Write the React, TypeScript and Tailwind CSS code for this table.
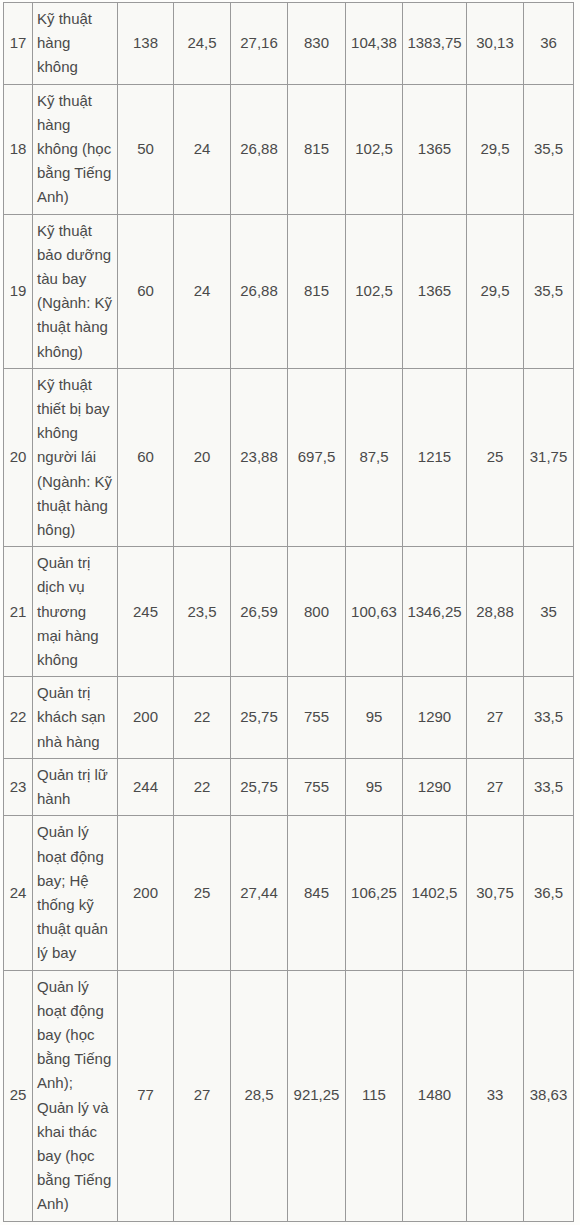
import React from "react";

type Row = {
  stt: string;
  name: string[];
  values: string[];
};

const rows: Row[] = [
  {
    stt: "17",
    name: ["Kỹ thuật", "hàng", "không"],
    values: ["138", "24,5", "27,16", "830", "104,38", "1383,75", "30,13", "36"],
  },
  {
    stt: "18",
    name: ["Kỹ thuật", "hàng", "không (học", "bằng Tiếng", "Anh)"],
    values: ["50", "24", "26,88", "815", "102,5", "1365", "29,5", "35,5"],
  },
  {
    stt: "19",
    name: ["Kỹ thuật", "bảo dưỡng", "tàu bay", "(Ngành: Kỹ", "thuật hàng", "không)"],
    values: ["60", "24", "26,88", "815", "102,5", "1365", "29,5", "35,5"],
  },
  {
    stt: "20",
    name: ["Kỹ thuật", "thiết bị bay", "không", "người lái", "(Ngành: Kỹ", "thuật hàng", "hông)"],
    values: ["60", "20", "23,88", "697,5", "87,5", "1215", "25", "31,75"],
  },
  {
    stt: "21",
    name: ["Quản trị", "dịch vụ", "thương", "mại hàng", "không"],
    values: ["245", "23,5", "26,59", "800", "100,63", "1346,25", "28,88", "35"],
  },
  {
    stt: "22",
    name: ["Quản trị", "khách sạn", "nhà hàng"],
    values: ["200", "22", "25,75", "755", "95", "1290", "27", "33,5"],
  },
  {
    stt: "23",
    name: ["Quản trị lữ", "hành"],
    values: ["244", "22", "25,75", "755", "95", "1290", "27", "33,5"],
  },
  {
    stt: "24",
    name: ["Quản lý", "hoạt động", "bay; Hệ", "thống kỹ", "thuật quản", "lý bay"],
    values: ["200", "25", "27,44", "845", "106,25", "1402,5", "30,75", "36,5"],
  },
  {
    stt: "25",
    name: [
      "Quản lý",
      "hoạt động",
      "bay (học",
      "bằng Tiếng",
      "Anh);",
      "Quản lý và",
      "khai thác",
      "bay (học",
      "bằng Tiếng",
      "Anh)",
    ],
    values: ["77", "27", "28,5", "921,25", "115", "1480", "33", "38,63"],
  },
];

const colWidths = [29, 85, 56, 57, 57, 58, 57, 64, 57, 50];

export default function App() {
  return (
    <div className="min-h-[1225px] w-[580px] bg-[#fdfdfb] pt-[2px] pl-[3px] font-['Liberation_Sans',Arial,sans-serif] text-[15px] leading-[24.2px] text-[#4a4a4a]">
      <table className="table-fixed border-collapse bg-[#f9f9f6] w-[570px]">
        <colgroup>
          {colWidths.map((w, i) => (
            <col key={i} style={{ width: w }} />
          ))}
        </colgroup>
        <tbody>
          {rows.map((row) => (
            <tr key={row.stt}>
              <td className="border border-[#9a9a9a] px-0 py-[4px] text-center align-middle">
                {row.stt}
              </td>
              <td className="border border-[#9a9a9a] px-[4px] py-[4px] align-middle">
                {row.name.map((line, i) => (
                  <div key={i} className="whitespace-nowrap">
                    {line}
                  </div>
                ))}
              </td>
              {row.values.map((v, i) => (
                <td
                  key={i}
                  className="border border-[#9a9a9a] px-0 py-[4px] text-center align-middle whitespace-nowrap"
                >
                  {v}
                </td>
              ))}
            </tr>
          ))}
        </tbody>
      </table>
    </div>
  );
}
